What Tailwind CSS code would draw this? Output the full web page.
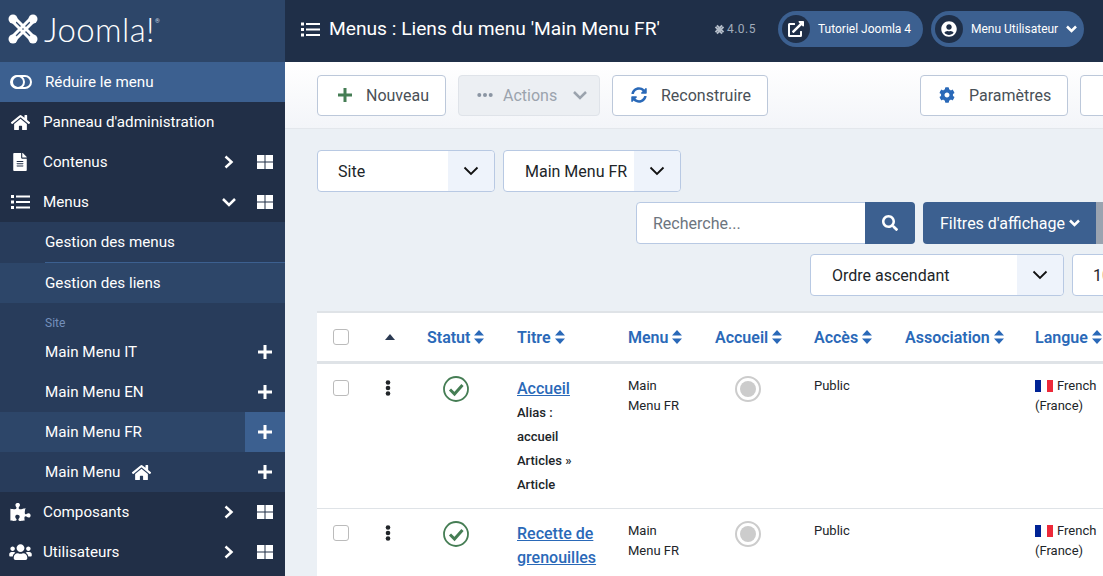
<!DOCTYPE html>
<html lang="fr">
<head>
    <meta charset="UTF-8">
    <meta name="viewport" content="width=device-width, initial-scale=1.0">
    <title>Menus : Liens du menu 'Main Menu FR'</title>
    <script src="https://cdn.jsdelivr.net/npm/@tailwindcss/browser@4"></script>
</head>
<body class="h-[576px] w-[1103px] overflow-hidden bg-[#ebf0f5] font-['Roboto',sans-serif] text-[#212529]">
<div class="flex h-[576px] w-[1103px] overflow-hidden">

    <!-- Sidebar -->
    <aside class="h-full w-[285px] shrink-0 overflow-hidden bg-[#212f47] text-[15.2px] text-white">
        <div class="flex h-[62px] items-center bg-[#2d4669] pb-1 pl-2">
            <svg class="h-[30px] w-[30px]" viewBox="0 0 30 30" fill="none" stroke="white" stroke-width="3">
                <path d="M4 7L23 26M7 4L26 23M26 7L7 26M23 4L4 23"/>
                <g fill="white" stroke="none"><circle cx="5" cy="5" r="4.500"/><circle cx="25" cy="5" r="4.500"/><circle cx="5" cy="25" r="4.500"/><circle cx="25" cy="25" r="4.500"/></g>
            </svg>
            <span class="ml-[6px] font-['Lato',sans-serif] text-[33px] leading-none font-light tracking-[0.4px]">Joomla!</span>
            <span class="mb-[16px] text-[6px] leading-none text-[#cfd6e0]">®</span>
        </div>
        <div class="flex h-10 items-center bg-[#3c6090] pl-2.5">
            <svg class="h-[14px] w-[22px]" viewBox="0 0 22 14" fill="none" stroke="white" stroke-width="2"><rect x="1" y="1" width="20" height="12" rx="6"/><circle cx="8" cy="7" r="6"/></svg>
            <span class="ml-[13px]">Réduire le menu</span>
        </div>
        <div class="flex h-10 items-center pl-2.5">
            <svg class="h-[17px] w-[21px]" viewBox="0 0 576 512" fill="white"><path d="M280.37 148.26L96 300.11V464a16 16 0 0 0 16 16l112.06-.29a16 16 0 0 0 15.92-16V368a16 16 0 0 1 16-16h64a16 16 0 0 1 16 16v95.64a16 16 0 0 0 16 16.05L464 480a16 16 0 0 0 16-16V300L295.67 148.26a12.19 12.19 0 0 0-15.3 0zM571.6 251.47L488 182.56V44.05a12 12 0 0 0-12-12h-56a12 12 0 0 0-12 12v72.61L318.47 43a48 48 0 0 0-61 0L4.34 251.47a12 12 0 0 0-1.6 16.9l25.5 31A12 12 0 0 0 45.15 301l235.22-193.74a12.19 12.19 0 0 1 15.3 0L530.9 301a12 12 0 0 0 16.9-1.6l25.5-31a12 12 0 0 0-1.7-16.93z"/></svg>
            <span class="ml-[12px]">Panneau d'administration</span>
        </div>
        <div class="flex h-10 items-center pl-[13px]">
            <svg class="h-[18px] w-[14px]" viewBox="0 0 384 512" fill="white"><path d="M224 136V0H24C10.7 0 0 10.7 0 24v464c0 13.3 10.7 24 24 24h336c13.3 0 24-10.7 24-24V160H248c-13.2 0-24-10.8-24-24zm64 236c0 6.6-5.4 12-12 12H108c-6.6 0-12-5.4-12-12v-8c0-6.6 5.4-12 12-12h168c6.6 0 12 5.4 12 12v8zm0-64c0 6.6-5.4 12-12 12H108c-6.6 0-12-5.4-12-12v-8c0-6.6 5.4-12 12-12h168c6.6 0 12 5.4 12 12v8zm0-72v8c0 6.6-5.4 12-12 12H108c-6.6 0-12-5.4-12-12v-8c0-6.6 5.4-12 12-12h168c6.6 0 12 5.4 12 12zm96-114.1v6.1H256V0h6.1c6.4 0 12.5 2.5 17 7l97.9 98c4.5 4.5 7 10.6 7 16.9z"/></svg>
            <span class="ml-[16px]">Contenus</span>
            <svg class="ml-auto h-3.5 w-3" viewBox="0 0 12 14" fill="none" stroke="white" stroke-width="2.5"><path d="M2.5 1.5L8.500 7L2.500 12.500"/></svg>
            <svg class="mr-[12px] ml-[22px] h-[14px] w-4" viewBox="0 0 16 14" fill="white"><path d="M0 0H7.5V6.500H0zM8.500 0H16V6.500H8.500zM0 7.500H7.500V14H0zM8.500 7.500H16V14H8.500z"/></svg>
        </div>
        <div class="flex h-10 items-center pl-[11px]">
            <svg class="h-[14px] w-[19px]" viewBox="0 0 19 14" fill="white"><path d="M0 0H3V3H0zM5 .5H19V2.5H5zM0 5.5H3V8.500H0zM5 6H19V8H5zM0 11H3V14H0zM5 11.500H19V13.500H5z"/></svg>
            <span class="ml-[13px]">Menus</span>
            <svg class="ml-auto h-3 w-3.5" viewBox="0 0 14 12" fill="none" stroke="white" stroke-width="2.5"><path d="M1 3L7 9L13 3"/></svg>
            <svg class="mr-[12px] ml-[21px] h-[14px] w-4" viewBox="0 0 16 14" fill="white"><path d="M0 0H7.5V6.500H0zM8.500 0H16V6.500H8.500zM0 7.500H7.500V14H0zM8.500 7.500H16V14H8.500z"/></svg>
        </div>
        <div class="bg-[#283c5b]">
            <div class="flex h-10 items-center pl-[45px]">Gestion des menus</div>
            <div class="ml-[45px] h-px bg-[#3c6090]"></div>
            <div class="flex h-10 items-center bg-[#2d4669] pl-[45px]">Gestion des liens</div>
            <div class="flex h-[29px] items-center pt-[10px] pl-[45px] text-xs text-[#7490bb]">Site</div>
            <div class="flex h-10 items-center pl-[45px]">Main Menu IT
                <svg class="mr-[13px] ml-auto h-3.5 w-3.5" viewBox="0 0 14 14" fill="white"><path d="M5.500 0H8.500V5.500H14V8.500H8.500V14H5.500V8.500H0V5.500H5.500z"/></svg>
            </div>
            <div class="flex h-10 items-center pl-[45px]">Main Menu EN
                <svg class="mr-[13px] ml-auto h-3.5 w-3.5" viewBox="0 0 14 14" fill="white"><path d="M5.500 0H8.500V5.500H14V8.500H8.500V14H5.500V8.500H0V5.500H5.500z"/></svg>
            </div>
            <div class="flex h-10 items-center bg-[#2d4669] pl-[45px]">Main Menu FR
                <div class="ml-auto flex h-10 w-10 items-center justify-center bg-[#3c6090]">
                    <svg class="h-3.5 w-3.5" viewBox="0 0 14 14" fill="white"><path d="M5.500 0H8.500V5.500H14V8.500H8.500V14H5.500V8.500H0V5.500H5.500z"/></svg>
                </div>
            </div>
            <div class="flex h-10 items-center pl-[45px]">Main Menu
                <svg class="ml-[11px] h-[17px] w-[21px]" viewBox="0 0 576 512" fill="white"><path d="M280.37 148.26L96 300.11V464a16 16 0 0 0 16 16l112.06-.29a16 16 0 0 0 15.92-16V368a16 16 0 0 1 16-16h64a16 16 0 0 1 16 16v95.64a16 16 0 0 0 16 16.05L464 480a16 16 0 0 0 16-16V300L295.67 148.26a12.19 12.19 0 0 0-15.3 0zM571.6 251.47L488 182.56V44.05a12 12 0 0 0-12-12h-56a12 12 0 0 0-12 12v72.61L318.47 43a48 48 0 0 0-61 0L4.34 251.47a12 12 0 0 0-1.6 16.9l25.5 31A12 12 0 0 0 45.15 301l235.22-193.74a12.19 12.19 0 0 1 15.3 0L530.9 301a12 12 0 0 0 16.9-1.6l25.5-31a12 12 0 0 0-1.7-16.93z"/></svg>
                <svg class="mr-[13px] ml-auto h-3.5 w-3.5" viewBox="0 0 14 14" fill="white"><path d="M5.500 0H8.500V5.500H14V8.500H8.500V14H5.500V8.500H0V5.500H5.500z"/></svg>
            </div>
        </div>
        <div class="flex h-10 items-center pl-2.5">
            <svg class="h-[18px] w-[21px]" viewBox="0 0 576 512" fill="white"><path d="M519.442 288.651c-41.519 0-59.5 31.593-82.058 31.593C377.409 320.244 432 144 432 144s-196.288 80-196.288-3.297c0-35.827 36.288-46.25 36.288-85.985C272 19.216 243.885 0 210.539 0c-34.654 0-66.366 18.891-66.366 56.346 0 41.364 31.711 59.277 31.711 81.75C175.885 207.719 0 166.758 0 166.758v333.237s178.635 41.047 178.635-28.662c0-22.473-40-40.107-40-81.471 0-37.456 29.25-56.346 63.577-56.346 33.673 0 61.788 19.216 61.788 54.717 0 39.735-36.288 50.158-36.288 85.985 0 60.803 129.675 25.73 181.23 25.73 0 0-34.725-120.101 25.827-120.101 35.962 0 46.423 36.152 86.308 36.152C556.712 416 576 387.99 576 354.443c0-34.199-18.962-65.792-56.558-65.792z"/></svg>
            <span class="ml-[12px]">Composants</span>
            <svg class="ml-auto h-3.5 w-3" viewBox="0 0 12 14" fill="none" stroke="white" stroke-width="2.5"><path d="M2.500 1.500L8.500 7L2.500 12.500"/></svg>
            <svg class="mr-[12px] ml-[22px] h-[14px] w-4" viewBox="0 0 16 14" fill="white"><path d="M0 0H7.5V6.500H0zM8.500 0H16V6.500H8.500zM0 7.500H7.500V14H0zM8.500 7.500H16V14H8.500z"/></svg>
        </div>
        <div class="flex h-10 items-center pl-[9px]">
            <svg class="h-[18px] w-[23px]" viewBox="0 0 640 512" fill="white"><path d="M96 224c35.3 0 64-28.7 64-64s-28.7-64-64-64-64 28.7-64 64 28.7 64 64 64zm448 0c35.3 0 64-28.7 64-64s-28.7-64-64-64-64 28.7-64 64 28.7 64 64 64zm32 32h-64c-17.6 0-33.5 7.1-45.1 18.6 40.3 22.1 68.9 62 75.1 109.4h66c17.7 0 32-14.3 32-32v-32c0-35.3-28.7-64-64-64zm-256 0c61.9 0 112-50.1 112-112S381.9 32 320 32 208 82.1 208 144s50.1 112 112 112zm76.8 32h-8.3c-20.8 10-43.9 16-68.5 16s-47.6-6-68.5-16h-8.3C179.6 288 128 339.6 128 403.2V432c0 26.5 21.5 48 48 48h288c26.5 0 48-21.5 48-48v-28.8c0-63.6-51.6-115.2-115.2-115.2zm-223.7-13.4C161.5 263.1 145.6 256 128 256H64c-35.3 0-64 28.7-64 64v32c0 17.7 14.3 32 32 32h65.9c6.3-47.4 34.9-87.3 75.2-109.4z"/></svg>
            <span class="ml-[11px]">Utilisateurs</span>
            <svg class="ml-auto h-3.5 w-3" viewBox="0 0 12 14" fill="none" stroke="white" stroke-width="2.5"><path d="M2.500 1.500L8.500 7L2.500 12.500"/></svg>
            <svg class="mr-[12px] ml-[22px] h-[14px] w-4" viewBox="0 0 16 14" fill="white"><path d="M0 0H7.5V6.500H0zM8.500 0H16V6.500H8.500zM0 7.500H7.500V14H0zM8.500 7.500H16V14H8.500z"/></svg>
        </div>
    </aside>

    <div class="min-w-0 flex-1 overflow-hidden">
        <!-- Top bar -->
        <header class="flex h-[62px] items-center bg-[#1f2f48] pb-1 pl-4 text-white">
            <svg class="h-[15px] w-[19px]" viewBox="0 0 19 14" fill="white"><path d="M0 0H3V3H0zM5 .5H19V2.5H5zM0 5.5H3V8.500H0zM5 6H19V8H5zM0 11H3V14H0zM5 11.500H19V13.500H5z"/></svg>
            <h1 class="ml-[9px] text-[19.2px] whitespace-nowrap">Menus : Liens du menu 'Main Menu FR'</h1>
            <div class="ml-[54px] flex items-center text-xs text-[#a0acbb]">
                <svg class="h-[11px] w-[11px]" viewBox="0 0 30 30" fill="none" stroke="#b4bdc9" stroke-width="5"><path d="M4 8L22 26M8 4L26 22M26 8L8 26M22 4L4 22"/></svg>
                <span class="ml-[2px] tracking-[0.5px]">4.0.5</span>
            </div>
            <div class="ml-[22px] flex h-9 w-[145px] shrink-0 items-center rounded-full bg-[#3c6090] pl-1">
                <div class="flex h-7 w-7 items-center justify-center rounded-full bg-[#1f2f48]">
                    <svg class="h-4 w-4" viewBox="0 0 512 512" fill="white"><path d="M432,320H400a16,16,0,0,0-16,16V448H64V128H208a16,16,0,0,0,16-16V80a16,16,0,0,0-16-16H48A48,48,0,0,0,0,112V464a48,48,0,0,0,48,48H400a48,48,0,0,0,48-48V336A16,16,0,0,0,432,320ZM488,0h-128c-21.37,0-32.05,25.91-17,41l35.73,35.73L135,320.37a24,24,0,0,0,0,34L157.67,377a24,24,0,0,0,34,0L435.28,133.32,471,169c15,15,41,4.5,41-17V24A24,24,0,0,0,488,0Z"/></svg>
                </div>
                <span class="ml-2 text-xs whitespace-nowrap">Tutoriel Joomla 4</span>
            </div>
            <div class="ml-2 flex h-9 w-[153px] shrink-0 items-center rounded-full bg-[#3c6090] pl-1">
                <div class="flex h-7 w-7 items-center justify-center rounded-full bg-[#1f2f48]">
                    <svg class="h-4 w-4" viewBox="0 0 496 512" fill="white"><path d="M248 8C111 8 0 119 0 256s111 248 248 248 248-111 248-248S385 8 248 8zm0 96c48.6 0 88 39.4 88 88s-39.4 88-88 88-88-39.4-88-88 39.4-88 88-88zm0 344c-58.7 0-111.3-26.6-146.5-68.2 18.8-35.4 55.6-59.8 98.5-59.8 2.4 0 4.8.4 7.1 1.1 13 4.2 26.6 6.9 40.9 6.9 14.3 0 28-2.7 40.9-6.9 2.3-.7 4.7-1.1 7.1-1.1 42.9 0 79.7 24.4 98.5 59.8C359.3 421.4 306.7 448 248 448z"/></svg>
                </div>
                <span class="ml-2 text-xs whitespace-nowrap">Menu Utilisateur</span>
                <svg class="ml-2 h-2 w-[11px]" viewBox="0 0 11 8" fill="none" stroke="white" stroke-width="2.5"><path d="M1 1.500L5.500 6L10 1.500"/></svg>
            </div>
        </header>

        <!-- Toolbar -->
        <div class="flex h-[67px] w-[850px] items-center border-b border-[#e3e7ec] bg-linear-to-b from-white to-[#f3f5f9] pl-8 text-base text-[#495057]">
            <button class="flex h-[41px] w-[129px] shrink-0 items-center rounded border border-[#bcc8da] bg-white pl-[20px]">
                <svg class="h-[14px] w-[14px]" viewBox="0 0 14 14" fill="#457d54"><path d="M5.500 0H8.500V5.500H14V8.500H8.500V14H5.500V8.500H0V5.500H5.500z"/></svg>
                <span class="ml-[14px] pt-px">Nouveau</span>
            </button>
            <button class="ml-3 flex h-[41px] w-[142px] shrink-0 items-center rounded border border-[#dfe3e9] bg-[#eceff3] pl-[18px] text-[#9ba3ad]">
                <svg class="h-1 w-4" viewBox="0 0 16 4" fill="#8b95a3"><circle cx="2.300" cy="2" r="2"/><circle cx="8" cy="2" r="2"/><circle cx="13.700" cy="2" r="2"/></svg>
                <span class="ml-[10px] pt-px">Actions</span>
                <svg class="ml-[16px] h-2.5 w-[14px]" viewBox="0 0 14 10" fill="none" stroke="#9ba3ad" stroke-width="2.5"><path d="M1 2L7 8L13 2"/></svg>
            </button>
            <button class="ml-3 flex h-[41px] w-[156px] shrink-0 items-center rounded border border-[#bcc8da] bg-white pl-[18px]">
                <svg class="h-4 w-4" viewBox="0 0 512 512" fill="#2a69b8"><path d="M370.72 133.28C339.458 104.008 298.888 87.962 255.848 88c-77.458.068-144.328 53.178-162.791 126.85-1.344 5.363-6.122 9.15-11.651 9.15H24.103c-7.498 0-13.194-6.807-11.807-14.176C33.933 94.924 134.813 8 256 8c66.448 0 126.791 26.136 171.315 68.685L463.03 40.97C478.149 25.851 504 36.559 504 57.941V192c0 13.255-10.745 24-24 24H345.941c-21.382 0-32.09-25.851-16.971-40.971l41.75-41.749zM32 296h134.059c21.382 0 32.09 25.851 16.971 40.971l-41.75 41.75c31.262 29.273 71.835 45.319 114.876 45.28 77.418-.07 144.315-53.144 162.787-126.849 1.344-5.363 6.122-9.15 11.651-9.15h57.304c7.498 0 13.194 6.807 11.807 14.176C478.067 417.076 377.187 504 256 504c-66.448 0-126.791-26.136-171.315-68.685L48.97 471.03C33.851 486.149 8 475.441 8 454.059V320c0-13.255 10.745-24 24-24z"/></svg>
                <span class="ml-[14px] pt-px">Reconstruire</span>
            </button>
            <button class="ml-[152px] flex h-[41px] w-[148px] shrink-0 items-center rounded border border-[#bcc8da] bg-white pl-[18px]">
                <svg class="h-4 w-4" viewBox="0 0 512 512" fill="#2a69b8"><path d="M487.4 315.7l-42.6-24.6c4.3-23.2 4.3-47 0-70.2l42.6-24.6c4.9-2.8 7.1-8.6 5.5-14-11.1-35.6-30-67.8-54.7-94.6-3.8-4.1-10-5.1-14.8-2.3L380.8 110c-17.9-15.4-38.5-27.3-60.8-35.1V25.8c0-5.6-3.9-10.5-9.4-11.7-36.7-8.2-74.3-7.8-109.2 0-5.5 1.2-9.4 6.1-9.4 11.7V75c-22.2 7.9-42.8 19.8-60.8 35.1L88.7 85.5c-4.9-2.8-11-1.9-14.8 2.3-24.7 26.7-43.6 58.9-54.7 94.6-1.7 5.4.6 11.2 5.5 14L67.3 221c-4.3 23.2-4.3 47 0 70.2l-42.6 24.6c-4.9 2.8-7.1 8.6-5.5 14 11.1 35.6 30 67.8 54.7 94.6 3.8 4.1 10 5.1 14.8 2.3l42.6-24.6c17.9 15.4 38.5 27.3 60.8 35.1v49.2c0 5.6 3.9 10.5 9.4 11.7 36.7 8.2 74.3 7.8 109.2 0 5.5-1.2 9.4-6.1 9.4-11.7v-49.2c22.2-7.9 42.8-19.8 60.8-35.1l42.6 24.6c4.9 2.8 11 1.9 14.8-2.3 24.7-26.7 43.6-58.9 54.7-94.6 1.5-5.5-.7-11.3-5.6-14.1zM256 336c-44.1 0-80-35.9-80-80s35.9-80 80-80 80 35.9 80 80-35.9 80-80 80z"/></svg>
                <span class="ml-[14px] pt-px">Paramètres</span>
            </button>
            <button class="ml-3 flex h-[41px] w-[100px] shrink-0 items-center rounded border border-[#bcc8da] bg-white"></button>
        </div>

        <!-- Filters -->
        <div class="w-[850px] pt-[21px] pl-8 text-base">
            <div class="flex gap-2">
                <div class="flex h-[42px] w-[178px] items-center rounded border border-[#b8c9e3] bg-white pl-5">
                    <span class="pt-px">Site</span>
                    <div class="ml-auto flex h-full w-[46px] items-center justify-center rounded-r bg-[#eef3fb]">
                        <svg class="h-2.5 w-4" viewBox="0 0 16 10" fill="none" stroke="#111" stroke-width="1.8"><path d="M1.500 1.500L8 8L14.500 1.500"/></svg>
                    </div>
                </div>
                <div class="flex h-[42px] w-[178px] items-center rounded border border-[#b8c9e3] bg-white pl-[21px]">
                    <span class="pt-px whitespace-nowrap">Main Menu FR</span>
                    <div class="ml-auto flex h-full w-[46px] items-center justify-center rounded-r bg-[#eef3fb]">
                        <svg class="h-2.5 w-4" viewBox="0 0 16 10" fill="none" stroke="#111" stroke-width="1.8"><path d="M1.500 1.500L8 8L14.500 1.500"/></svg>
                    </div>
                </div>
            </div>
            <div class="mt-[10px] ml-[319px] flex">
                <div class="flex h-[42px] w-[279px] items-center rounded border border-[#b8c9e3] bg-white pl-4 text-[#6d757e]">
                    <span class="pt-px">Recherche...</span>
                    <div class="-mr-px ml-auto flex h-[42px] w-[50px] items-center justify-center rounded-r bg-[#3c6090]">
                        <svg class="h-4 w-4" viewBox="0 0 512 512" fill="white"><path d="M505 442.7L405.3 343c-4.5-4.5-10.6-7-17-7H372c27.6-35.3 44-79.7 44-128C416 93.1 322.9 0 208 0S0 93.1 0 208s93.1 208 208 208c48.3 0 92.7-16.4 128-44v16.3c0 6.4 2.5 12.5 7 17l99.7 99.7c9.4 9.4 24.6 9.4 33.9 0l28.3-28.3c9.4-9.4 9.4-24.6.1-34zM208 336c-70.7 0-128-57.2-128-128 0-70.7 57.2-128 128-128 70.7 0 128 57.2 128 128 0 70.7-57.2 128-128 128z"/></svg>
                    </div>
                </div>
                <button class="ml-2 flex h-[42px] w-[173px] shrink-0 items-center rounded-l bg-[#3c6090] pl-[17px] whitespace-nowrap text-white">
                    <span class="pt-px">Filtres d'affichage</span>
                    <svg class="ml-[4px] h-2 w-[11px]" viewBox="0 0 11 8" fill="none" stroke="white" stroke-width="2.5"><path d="M1 1.500L5.500 6L10 1.500"/></svg>
                </button>
                <div class="h-[42px] w-[20px] shrink-0 bg-[#9aa3b0]"></div>
            </div>
            <div class="mt-[10px] ml-[493px] flex gap-2">
                <div class="flex h-[42px] w-[254px] shrink-0 items-center rounded border border-[#b8c9e3] bg-white pl-[21px]">
                    <span class="pt-px">Ordre ascendant</span>
                    <div class="ml-auto flex h-full w-[46px] items-center justify-center rounded-r bg-[#eef3fb]">
                        <svg class="h-2.5 w-4" viewBox="0 0 16 10" fill="none" stroke="#111" stroke-width="1.8"><path d="M1.500 1.500L8 8L14.500 1.500"/></svg>
                    </div>
                </div>
                <div class="flex h-[42px] w-[100px] shrink-0 items-center rounded border border-[#b8c9e3] bg-white pl-[20px]"><span class="pt-px">10</span></div>
            </div>
        </div>

        <!-- Table -->
        <div class="mt-[15px] ml-8 h-[300px] w-[830px] bg-white">
            <table class="w-[830px] table-fixed border-collapse text-left text-[13px]">
                <colgroup>
                    <col class="w-[56px]"><col class="w-[44px]"><col class="w-[90px]"><col class="w-[111px]"><col class="w-[87px]"><col class="w-[99px]"><col class="w-[91px]"><col class="w-[131px]"><col>
                </colgroup>
                <thead>
                    <tr class="h-[50px] border-t-2 border-b-[3px] border-[#dfe3e7] text-base text-[#2a69b8]">
                        <th class="pl-4"><span class="block h-4 w-4 rounded-[3px] border border-[#bbb] bg-white"></span></th>
                        <th class="pl-3"><svg class="h-1.5 w-2.5" viewBox="0 0 10 6" fill="#2b3a52"><path d="M5 0L10 6H0z"/></svg></th>
                        <th class="pt-[3px] pl-2.5 font-semibold">Statut <svg class="inline h-[14px] w-[10px] align-[-1px]" viewBox="0 0 10 14" fill="#2a69b8"><path d="M5 0L10 5.500H0zM5 14L0 8.500H10z"/></svg></th>
                        <th class="pt-[3px] pl-2.5 font-semibold">Titre <svg class="inline h-[14px] w-[10px] align-[-1px]" viewBox="0 0 10 14" fill="#2a69b8"><path d="M5 0L10 5.500H0zM5 14L0 8.500H10z"/></svg></th>
                        <th class="pt-[3px] pl-2.5 font-semibold">Menu <svg class="inline h-[14px] w-[10px] align-[-1px]" viewBox="0 0 10 14" fill="#2a69b8"><path d="M5 0L10 5.500H0zM5 14L0 8.500H10z"/></svg></th>
                        <th class="pt-[3px] pl-2.5 font-semibold">Accueil <svg class="inline h-[14px] w-[10px] align-[-1px]" viewBox="0 0 10 14" fill="#2a69b8"><path d="M5 0L10 5.500H0zM5 14L0 8.500H10z"/></svg></th>
                        <th class="pt-[3px] pl-2.5 font-semibold">Accès <svg class="inline h-[14px] w-[10px] align-[-1px]" viewBox="0 0 10 14" fill="#2a69b8"><path d="M5 0L10 5.500H0zM5 14L0 8.500H10z"/></svg></th>
                        <th class="pt-[3px] pl-2.5 font-semibold">Association <svg class="inline h-[14px] w-[10px] align-[-1px]" viewBox="0 0 10 14" fill="#2a69b8"><path d="M5 0L10 5.500H0zM5 14L0 8.500H10z"/></svg></th>
                        <th class="pt-[3px] pl-[9px] font-semibold">Langue <svg class="inline h-[14px] w-[10px] align-[-1px]" viewBox="0 0 10 14" fill="#2a69b8"><path d="M5 0L10 5.500H0zM5 14L0 8.500H10z"/></svg></th>
                    </tr>
                </thead>
                <tbody>
                    <tr class="border-b border-[#dfe3e7] align-top">
                        <td class="pt-4 pl-4"><span class="block h-4 w-4 rounded-[3px] border border-[#bbb] bg-white"></span></td>
                        <td class="pt-4 pl-3"><svg class="h-[16px] w-[6px]" viewBox="0 0 6 16" fill="#212529"><circle cx="3" cy="2.500" r="2.300"/><circle cx="3" cy="8" r="2.300"/><circle cx="3" cy="13.500" r="2.300"/></svg></td>
                        <td class="pt-3 pl-[26px]"><svg class="h-[26px] w-[26px]" viewBox="0 0 26 26" fill="none" stroke="#457d54"><circle cx="13" cy="13" r="12" stroke-width="1.8"/><path d="M7 13.500L11.500 18L19.500 9" stroke-width="3"/></svg></td>
                        <td class="pt-[13px] pr-3 pb-[11px] pl-2.5 leading-6 font-medium">
                            <a class="block text-base text-[#2a69b8] underline">Accueil</a>
                            <div>Alias :<br>accueil</div>
                            <div>Articles » Article</div>
                        </td>
                        <td class="pt-3 pr-4 pl-2.5 leading-5">Main Menu FR</td>
                        <td class="pt-3 pl-[30px]"><span class="flex h-[26px] w-[26px] items-center justify-center rounded-full border-2 border-[#ccc] bg-white"><span class="block h-4 w-4 rounded-full bg-[#ccc]"></span></span></td>
                        <td class="pt-3 pl-2.5 leading-5">Public</td>
                        <td></td>
                        <td class="pt-3 pl-[9px] leading-5">
                            <svg class="mr-[4px] inline h-3 w-[18px] align-[-2px]" viewBox="0 0 18 12"><path fill="#002395" d="M0 0H6V12H0z"/><path fill="#fff" d="M6 0H12V12H6z"/><path fill="#ed2939" d="M12 0H18V12H12z"/></svg>French (France)
                        </td>
                    </tr>
                    <tr class="align-top">
                        <td class="pt-4 pl-4"><span class="block h-4 w-4 rounded-[3px] border border-[#bbb] bg-white"></span></td>
                        <td class="pt-4 pl-3"><svg class="h-[16px] w-[6px]" viewBox="0 0 6 16" fill="#212529"><circle cx="3" cy="2.500" r="2.300"/><circle cx="3" cy="8" r="2.300"/><circle cx="3" cy="13.500" r="2.300"/></svg></td>
                        <td class="pt-3 pl-[26px]"><svg class="h-[26px] w-[26px]" viewBox="0 0 26 26" fill="none" stroke="#457d54"><circle cx="13" cy="13" r="12" stroke-width="1.8"/><path d="M7 13.500L11.500 18L19.500 9" stroke-width="3"/></svg></td>
                        <td class="pt-[13px] pr-3 pl-2.5 leading-6 font-medium">
                            <a class="block text-base text-[#2a69b8] underline">Recette de grenouilles</a>
                        </td>
                        <td class="pt-3 pr-4 pl-2.5 leading-5">Main Menu FR</td>
                        <td class="pt-3 pl-[30px]"><span class="flex h-[26px] w-[26px] items-center justify-center rounded-full border-2 border-[#ccc] bg-white"><span class="block h-4 w-4 rounded-full bg-[#ccc]"></span></span></td>
                        <td class="pt-3 pl-2.5 leading-5">Public</td>
                        <td></td>
                        <td class="pt-3 pl-[9px] leading-5">
                            <svg class="mr-[4px] inline h-3 w-[18px] align-[-2px]" viewBox="0 0 18 12"><path fill="#002395" d="M0 0H6V12H0z"/><path fill="#fff" d="M6 0H12V12H6z"/><path fill="#ed2939" d="M12 0H18V12H12z"/></svg>French (France)
                        </td>
                    </tr>
                </tbody>
            </table>
        </div>
    </div>
</div>
</body>
</html>
